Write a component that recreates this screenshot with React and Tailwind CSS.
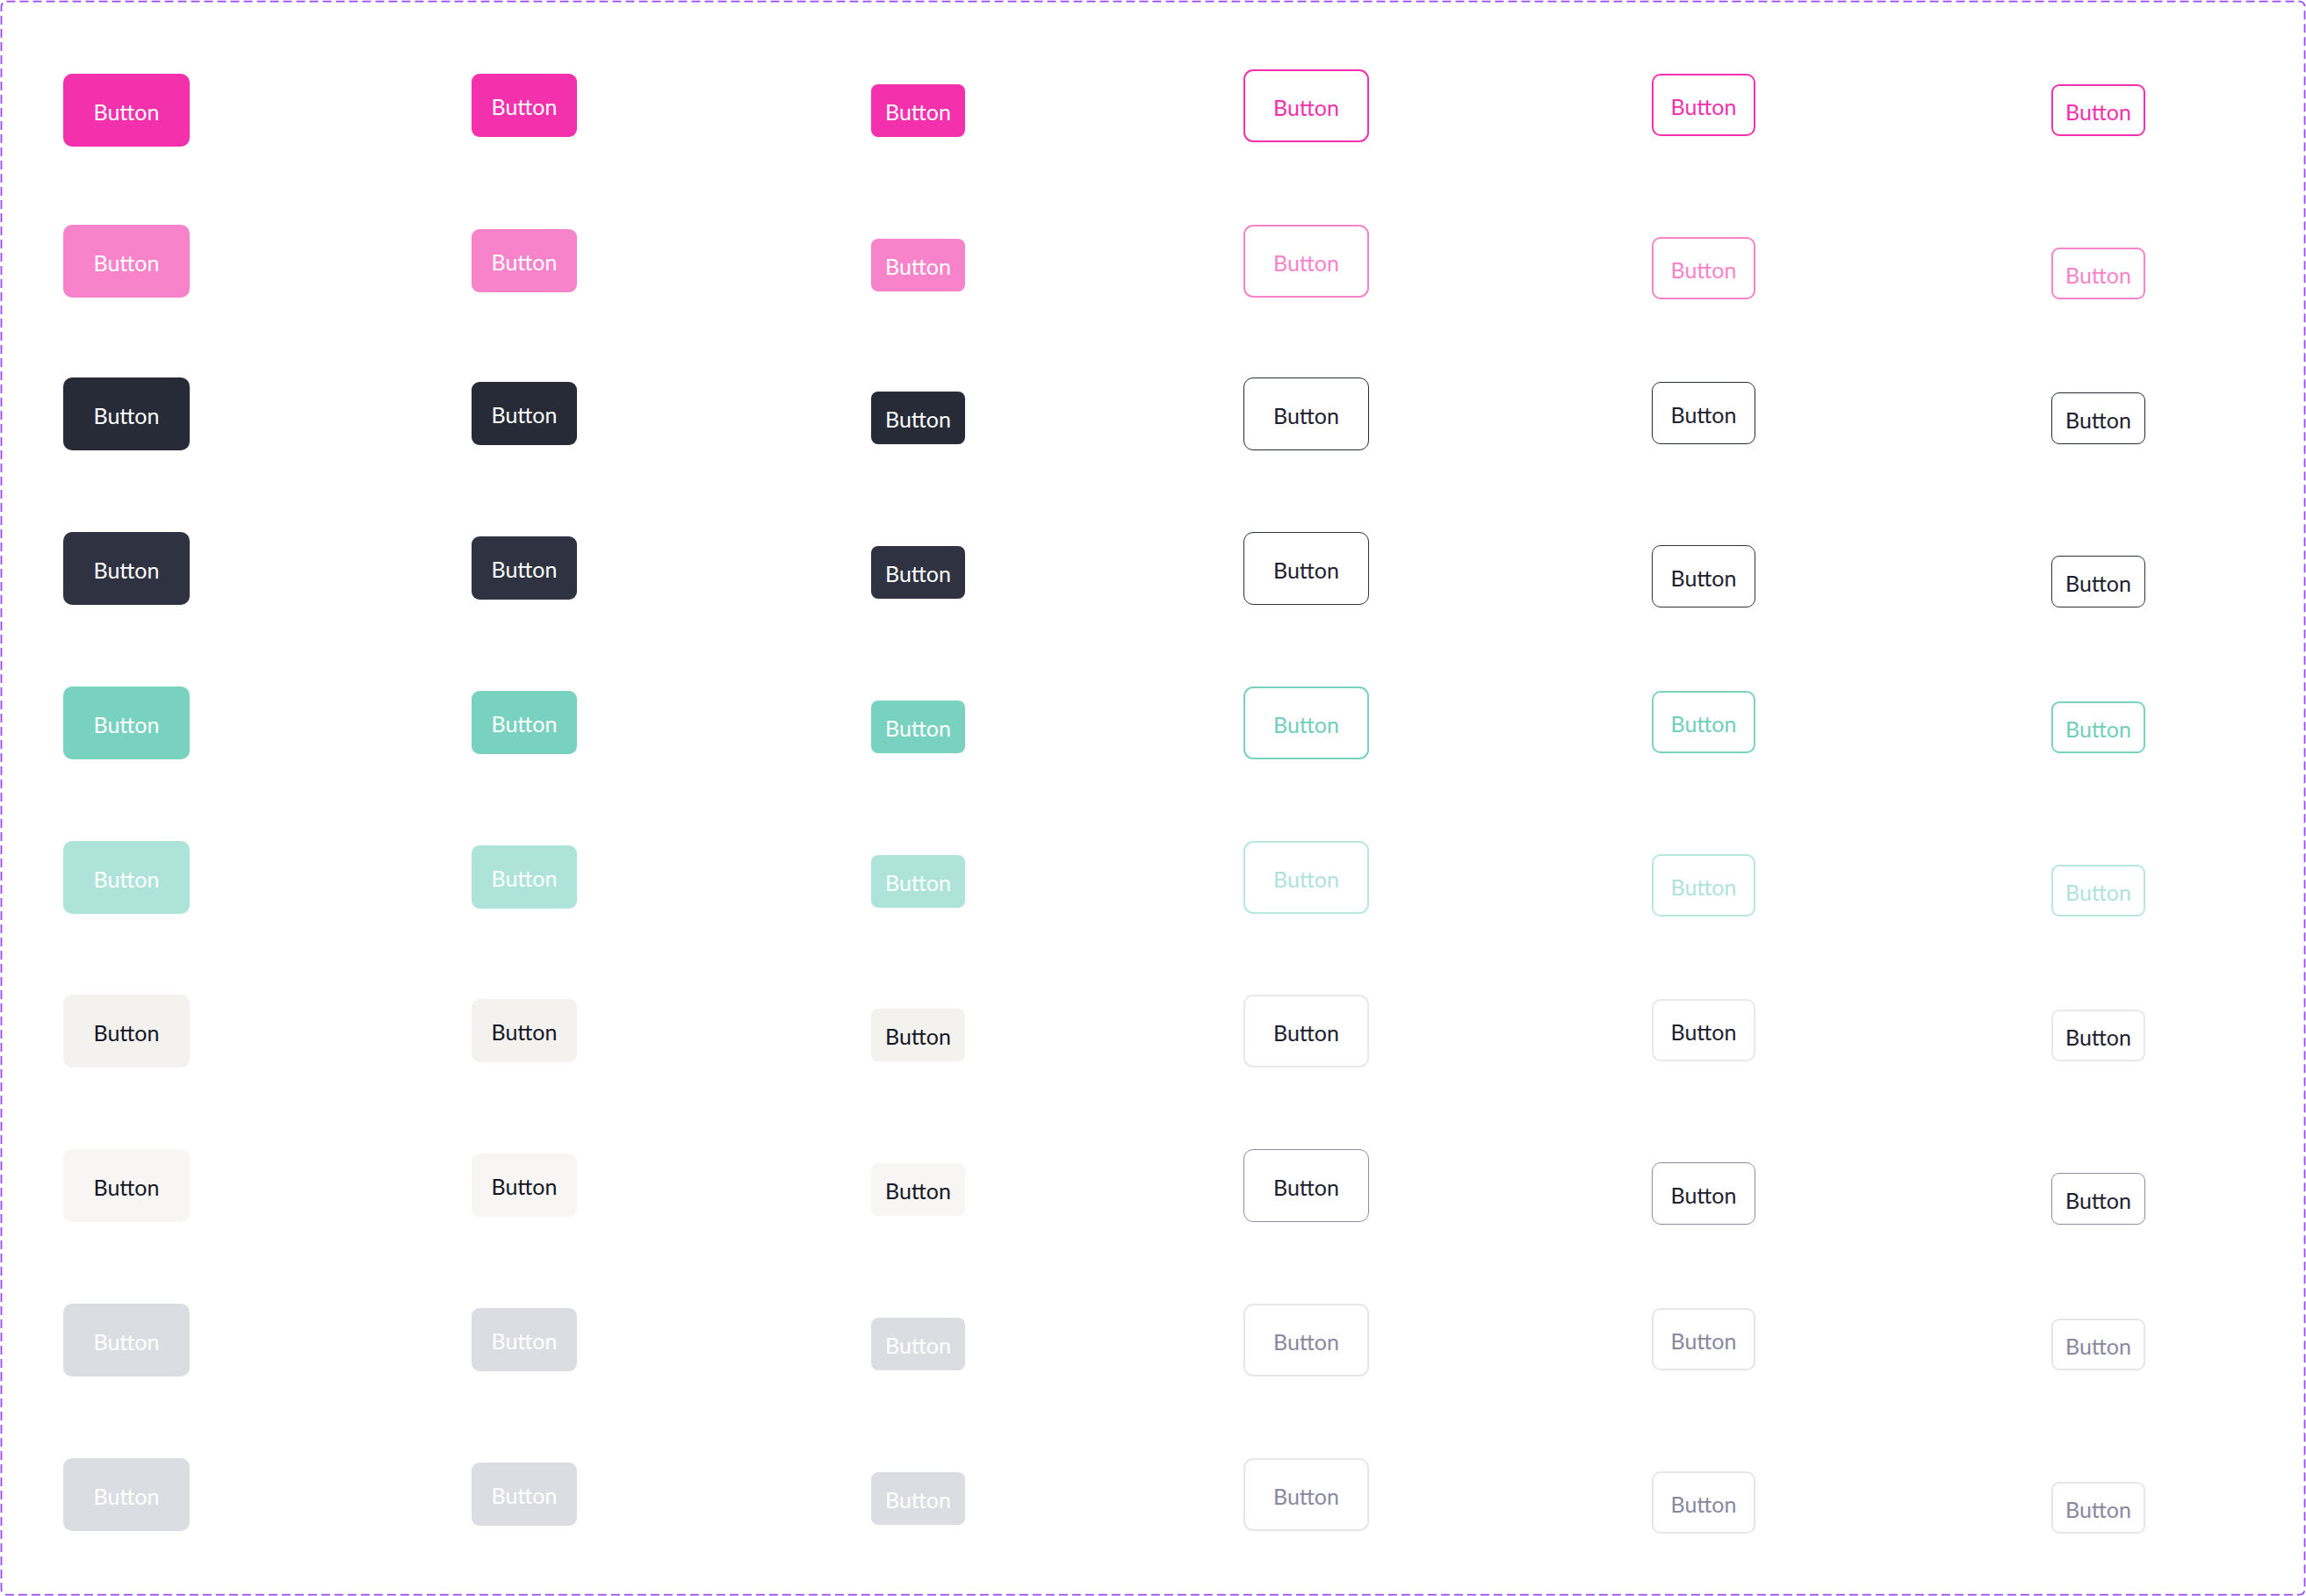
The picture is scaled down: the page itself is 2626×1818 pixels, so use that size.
const variants = [
  { fill: "bg-[#F331AC] text-white", line: "border-2 border-[#F331AC] text-[#F331AC]" },
  { fill: "bg-[#F783CA] text-white", line: "border-2 border-[#F783CA] text-[#F783CA]" },
  { fill: "bg-[#272B38] text-white", line: "border-[1.5px] border-[#272B38] text-[#1E2130]" },
  { fill: "bg-[#2F3241] text-white", line: "border-[1.5px] border-[#2F3241] text-[#1E2130]" },
  { fill: "bg-[#79D1C0] text-white", line: "border-2 border-[#79D1C0] text-[#6FCFBB]" },
  { fill: "bg-[#AEE3D9] text-white", line: "border-2 border-[#B8E7DE] text-[#AEE3D9]" },
  { fill: "bg-[#F3F2EF] text-[#161827]", line: "border-2 border-[#E8E7EC] text-[#1E2130]" },
  { fill: "bg-[#F7F6F4] text-[#161827]", line: "border-[1.5px] border-[#8E8BA4] text-[#1E2130]" },
  { fill: "bg-[#DCDDE2] text-white", line: "border-2 border-[#E6E6EA] text-[#8A889E]" },
  { fill: "bg-[#DCDDE2] text-white", line: "border-2 border-[#E6E6EA] text-[#8A889E]" },
];

// per-column size + little vertical nudges, as placed on the canvas
const columns = [
  {
    kind: "fill",
    size: "w-[144px] h-[83px] rounded-[10px]",
    offsets: ["mt-0", "mt-0", "mt-0", "mt-0", "mt-0", "mt-0", "mt-0", "mt-0", "mt-0", "mt-0"],
  },
  {
    kind: "fill",
    size: "w-[120px] h-[72px] rounded-[9px]",
    offsets: ["mt-0", "mt-[5px]", "mt-[5px]", "mt-[5px]", "mt-[5px]", "mt-[5px]", "mt-[5px]", "mt-[5px]", "mt-[5px]", "mt-[5px]"],
  },
  {
    kind: "fill",
    size: "w-[107px] h-[60px] rounded-[8px]",
    offsets: ["mt-[12px]", "mt-[16px]", "mt-[16px]", "mt-[16px]", "mt-[16px]", "mt-[16px]", "mt-[16px]", "mt-[16px]", "mt-[16px]", "mt-[16px]"],
  },
  {
    kind: "line",
    size: "w-[143px] h-[83px] rounded-[11px]",
    offsets: ["-mt-[5px]", "mt-0", "mt-0", "mt-0", "mt-0", "mt-0", "mt-0", "mt-0", "mt-0", "mt-0"],
  },
  {
    kind: "line",
    size: "w-[118px] h-[71px] rounded-[10px]",
    offsets: ["mt-0", "mt-[14px]", "mt-[5px]", "mt-[15px]", "mt-[5px]", "mt-[15px]", "mt-[5px]", "mt-[15px]", "mt-[5px]", "mt-[15px]"],
  },
  {
    kind: "line",
    size: "w-[107px] h-[59px] rounded-[9px]",
    offsets: ["mt-[12px]", "mt-[26px]", "mt-[17px]", "mt-[27px]", "mt-[17px]", "mt-[27px]", "mt-[17px]", "mt-[27px]", "mt-[17px]", "mt-[27px]"],
  },
];

const Button = ({ className }) => (
  <button className={`flex items-center justify-center pt-[3px] text-[25px] leading-none ${className}`}>
    Button
  </button>
);

export default function App() {
  return (
    <div className="relative w-[2626px] h-[1818px] bg-white font-[Lato,sans-serif]">
      <svg className="absolute inset-0 pointer-events-none" width="2626" height="1818">
        <rect
          x="1.5"
          y="1.5"
          width="2623"
          height="1815"
          rx="6"
          fill="none"
          stroke="#9747FF"
          strokeWidth="1.75"
          strokeDasharray="10 5"
        />
      </svg>

      <div className="grid grid-cols-[465px_455px_424px_465px_455px_1fr] grid-rows-[172px_174px_176px_176px_176px_175px_176px_176px_176px_auto] items-start pl-[72px] pt-[84px]">
        {variants.map((v, r) =>
          columns.map((c, ci) => (
            <div key={`${r}-${ci}`} className={c.offsets[r]}>
              <Button className={`${c.size} ${c.kind === "fill" ? v.fill : `bg-white ${v.line}`}`} />
            </div>
          ))
        )}
      </div>
    </div>
  );
}
